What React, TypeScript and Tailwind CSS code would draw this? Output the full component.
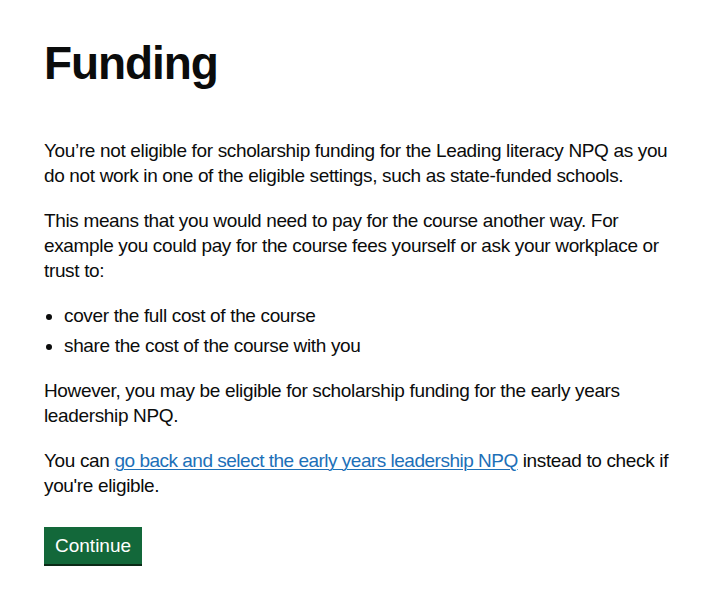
const App = () => {
  return (
    <div className="min-h-screen bg-white text-[#0b0c0c] font-['Liberation_Sans',Arial,sans-serif]">
      <main className="pl-[44px] pr-[10px] pt-[38px] pb-8">
        <div className="max-w-[660px] text-[19px] leading-[25px] tracking-[-0.35px]">
          <h1 className="mb-[50px] text-[46px] font-bold leading-[50px] tracking-[-1.1px]">
            Funding
          </h1>
          <p className="mb-5">
            You’re not eligible for scholarship funding for the Leading literacy NPQ as you
            <br />
            do not work in one of the eligible settings, such as state-funded schools.
          </p>
          <p className="mb-5">
            This means that you would need to pay for the course another way. For
            <br />
            example you could pay for the course fees yourself or ask your workplace or
            <br />
            trust to:
          </p>
          <ul className="mb-5 list-disc pl-5">
            <li className="mb-[5px]">cover the full cost of the course</li>
            <li className="mb-[5px]">share the cost of the course with you</li>
          </ul>
          <p className="mb-5">
            However, you may be eligible for scholarship funding for the early years
            <br />
            leadership NPQ.
          </p>
          <p className="mb-[29px]">
            You can{" "}
            <a
              href="#"
              className="text-[#1d70b8] tracking-[-0.5px] underline decoration-1 underline-offset-2"
            >
              go back and select the early years leadership NPQ
            </a>{" "}
            instead to check if
            <br />
            you're eligible.
          </p>
          <button className="bg-[#13683a] px-[11px] pt-[8px] pb-[8px] text-[19px] leading-[21px] tracking-normal text-white shadow-[0_2px_0_#0b2a17]">
            Continue
          </button>
        </div>
      </main>
    </div>
  );
};

export default App;
